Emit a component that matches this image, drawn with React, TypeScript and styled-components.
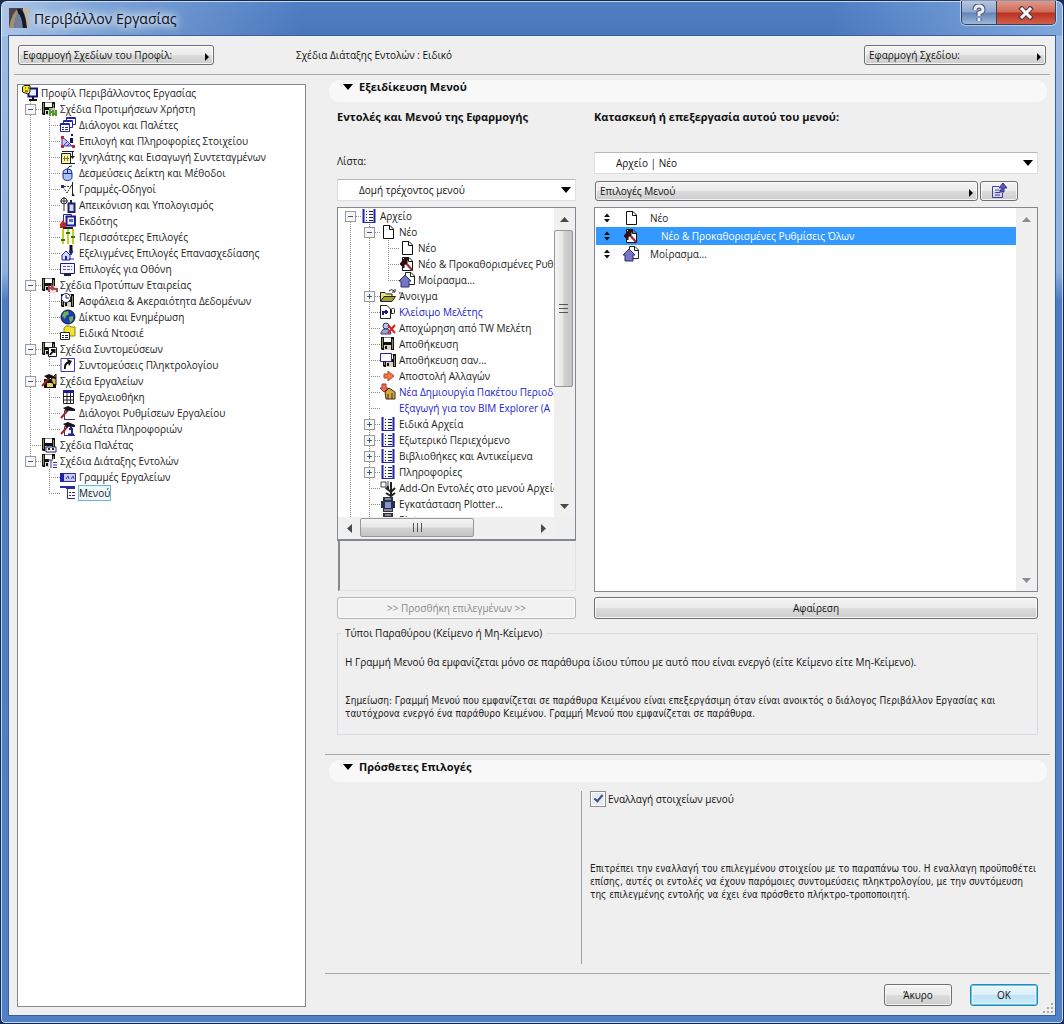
import React from 'react';
import styled, { createGlobalStyle, css } from 'styled-components';

const UI_FONT = '"Open Sans", "Noto Sans", sans-serif';
const NOTE_FONT = '"DejaVu Sans Condensed", "DejaVu Sans", sans-serif';

const Global = createGlobalStyle`
  *, *::before, *::after { box-sizing: border-box; }
  body { margin: 0; background: #1b2c4e; font-family: ${UI_FONT}; font-size: 10px; line-height: 16px; color: #111; }
  button, select, input { font: inherit; color: inherit; }
  p, h1, h2, h3, ul, fieldset { margin: 0; padding: 0; }
`;

/* ---------- window frame ---------- */

const Frame = styled.div`
  display: flex;
  flex-direction: column;
  min-height: 100vh;
  padding: 0 7px 7px;
  border: 1px solid #14284e;
  border-radius: 7px 7px 5px 5px;
  background:
    linear-gradient(90deg, rgba(190, 212, 238, 0.85) 0, rgba(140, 176, 222, 0.8) 90px, rgba(74, 120, 192, 0) 300px, rgba(74, 120, 192, 0) 78%, rgba(140, 180, 228, 0.8) 100%) 0 0 / 100% 35px no-repeat,
    linear-gradient(180deg, #4f7fc4 0, #4a77bc 34px, #9cbbe4 35px, #8fb1e0 270px, #4d7cc4 300px, #4f80c8 100%);
  box-shadow: inset 0 0 0 1px rgba(225, 238, 252, 0.8);
`;

const TitleBar = styled.header`
  display: flex;
  align-items: flex-start;
  height: 34px;
`;

const TitleText = styled.h1`
  flex: 1;
  padding: 7px 0 0 5px;
  font-size: 14px;
  font-weight: 400;
  line-height: 22px;
  color: #0a0f18;
  text-shadow: 0 0 8px #fff, 0 0 8px #fff, 0 0 12px rgba(255, 255, 255, 0.8);
`;

const LogoBox = styled.div`
  display: flex;
  padding: 7px 0 0 1px;
`;

const Caption = styled.div`
  display: flex;
  height: 24px;
  border: 1px solid #33415e;
  border-top: 0;
  border-radius: 0 0 5px 5px;
  overflow: hidden;
  box-shadow: 0 0 0 1px rgba(255, 255, 255, 0.5);
`;

const CaptionButton = styled.button<{ $close?: boolean }>`
  display: flex;
  align-items: center;
  justify-content: center;
  width: ${p => (p.$close ? 58 : 35)}px;
  padding: 0;
  border: 0;
  ${p => p.$close
    ? css`background: linear-gradient(180deg, #e0998a 0, #d06a58 48%, #b9301f 52%, #d3604a 100%);`
    : css`background: linear-gradient(180deg, #b4c6e2 0, #8da6cf 48%, #6483b6 52%, #9cb8dd 100%); border-right: 1px solid #33415e;`}
`;

const Dialog = styled.main`
  flex: 1;
  display: flex;
  flex-direction: column;
  border: 1px solid #3c5f97;
  background: #efefef;
  padding: 0 5px;
`;

/* ---------- controls ---------- */

const raised = css`
  border: 1px solid #707070;
  border-radius: 3px;
  background: linear-gradient(180deg, #f4f4f4 0, #ebebeb 48%, #dcdcdc 52%, #cdcdcd 100%);
  box-shadow: inset 0 0 0 1px rgba(255, 255, 255, 0.75);
`;

const MenuButton = styled.button<{ $width?: number }>`
  ${raised}
  display: flex;
  align-items: center;
  justify-content: space-between;
  ${p => (p.$width ? `width: ${p.$width}px;` : 'flex: 1;')}
  height: 20px;
  padding: 0 3px 0 4px;
  text-align: left;
  svg { align-self: flex-end; margin-bottom: 3px; }
`;

const IconButton = styled.button`
  ${raised}
  display: flex;
  align-items: center;
  justify-content: center;
  width: 38px;
  height: 20px;
  padding: 0;
`;

const PushButton = styled.button<{ $kind?: 'default' | 'wide' }>`
  ${raised}
  width: ${p => (p.$kind === 'wide' ? '100%' : '68px')};
  height: 22px;
  padding: 0;
  color: #111;
  &:disabled { color: #8b8b8b; border-color: #b4b4b4; background: #f2f2f2; }
  ${p => p.$kind === 'default' && css`
    border-color: #3c7fb1;
    background: linear-gradient(180deg, #eef8fd 0, #dceff9 48%, #bfe3f5 52%, #c9eaf8 100%);
    box-shadow: inset 0 0 0 1px #48d0f4, inset 0 0 0 2px rgba(255, 255, 255, 0.5);
  `}
`;

const SelectWrap = styled.div`
  position: relative;
  display: flex;
  background: #fff;
  border: 1px solid #dfdfdf;
  border-top-color: #b9b9b9;
  svg { position: absolute; right: 4px; top: 7px; pointer-events: none; }
`;

const Select = styled.select`
  appearance: none;
  flex: 1;
  height: 20px;
  padding: 0 24px 0 21px;
  border: 0;
  background: transparent;
`;

/* ---------- header ---------- */

const TopBar = styled.div`
  display: flex;
  align-items: center;
  gap: 82px;
  height: 39px;
  padding: 0 4px;
  border-bottom: 1px solid #a9a9a9;
`;

const TopText = styled.p`
  flex: 1;
`;

const Columns = styled.div`
  flex: 1;
  display: flex;
`;

/* ---------- tree ---------- */

const NavPanel = styled.nav`
  flex: 0 0 289px;
  margin: 9px 19px 8px 3px;
  padding: 0 4px;
  border: 1px solid #828790;
  background: #fff;
`;

const TreeList = styled.ul`
  list-style: none;
`;

const TreeItem = styled.li`
  display: flex;
  height: 16px;
  white-space: nowrap;
  color: #222;
`;

const Cell = styled.span`
  flex: 0 0 19px;
  height: 16px;
  svg { display: block; overflow: visible; }
`;

const ItemText = styled.span<{ $blue?: boolean; $focus?: boolean }>`
  color: ${p => (p.$blue ? '#2222cc' : 'inherit')};
  ${p => p.$focus && css`height: 14px; line-height: 14px; margin-top: 1px; outline: 1px solid #6fb4d8; background: #eff8fd;`}
`;

type Guide = 'v' | 't' | 'l' | '-' | 'e' | 'f' | '+' | ' ';
type Row = { g: string; icon: string; text: string; blue?: boolean; focus?: boolean };

function GuideCell({ kind }: { kind: Guide }) {
  const up = 'vtl-e+'.includes(kind);
  const down = 'vt-f+'.includes(kind);
  const box = '-ef+'.includes(kind);
  const side = kind !== 'v' && kind !== ' ';
  return (
    <Cell>
      <svg width="19" height="16" shapeRendering="crispEdges" stroke="#8c8c8c" strokeDasharray="1 1">
        {up && <path d="M8.500 0V8" />}
        {down && <path d="M8.500 8V16" />}
        {side && <path d="M8 8.500H19" />}
        {box && <rect x="3.500" y="3.500" width="10" height="10" rx="1" fill="#f6f6f6" stroke="#9a9a9a" strokeDasharray="none" />}
        {box && <path d={kind === '+' ? 'M6 8.500H11M8.500 6V11' : 'M6 8.500H11'} stroke="#3b5a94" strokeDasharray="none" />}
      </svg>
    </Cell>
  );
}

/* ---------- icons ---------- */

const floppy = (
  <>
    <path d="M1 1H14V14H2L1 13Z" fill="#111" />
    <path d="M4 1.500H11V6H4Z" fill="#fff" />
    <path d="M2 2H3V12H2ZM12 3H13V13H12Z" fill="#8f9048" />
    <path d="M4 9H11V14H4Z" fill="#d8d8c8" />
    <path d="M5 10H7V13H5Z" fill="#111" />
  </>
);
const page = <path d="M3.500 1.500H10L13.500 5V14.500H3.500ZM9.500 1.500V5.500H13.500" fill="#fff" stroke="#111" />;
const hammer = (
  <>
    <path d="M6 6L13 14" stroke="#a3252b" strokeWidth="2" />
    <path d="M1 8L6 2L9 2L8 5L8 7L5 9L5 12Z" fill="#2c0f12" stroke="#2c0f12" />
  </>
);
const pick = (
  <>
    <path d="M1 13L9 4" stroke="#a3252b" strokeWidth="2" />
    <path d="M3 3L8 1L15 4V6L9 5L7 6Z" fill="#141414" />
  </>
);
const listPage = (
  <>
    <path d="M2 1.500H14V14.500H2Z" fill="#f6f8ff" />
    <path d="M2.500 1V15M13.500 1V15" stroke="#2024b0" strokeWidth="2" />
    <path d="M2 14.500H14" stroke="#2024b0" />
    <path d="M5 3.500H6M8 3.500H12M5 6.500H6M8 6.500H12M5 9.500H6M8 9.500H12M5 12.500H6M8 12.500H12" stroke="#222" />
  </>
);
const house = <path d="M0 9L6 3L12 9H10V15H2V9Z" fill="#7676c4" stroke="#2b2b78" />;

const ICONS: Record<string, React.ReactNode> = {
  profile: (
    <>
      <path d="M6.500 3.500H15V11.500H6.500Z" fill="#e8ecff" stroke="#15157c" strokeWidth="2" />
      <path d="M11 12V15M7 15H15" stroke="#111" strokeWidth="2" />
      <path d="M.5 2L2 .5H8V7L6 9L.5 7Z" fill="#f1e62c" stroke="#222" />
      <path d="M3 3H4M6 3H7M3 6H6" stroke="#222" />
    </>
  ),
  saveUser: (<>{floppy}<path d="M8 7H16V16H8Z" fill="#fff" opacity=".7" /><path d="M9 8V15M9 11H12M12 9V15M15 9V15M12 13H16" stroke="#4c9b2c" strokeWidth="2" /></>),
  dialogs: (
    <g fill="#fff" stroke="#2525a8">
      <path d="M6.500 .5H15.500V7.500H6.500Z" /><path d="M6 1.500H16" />
      <path d="M3.500 3.500H12.500V10.500H3.500Z" /><path d="M3 4.500H13" />
      <path d="M.5 6.500H9.500V14.500H.5ZM0 7.500H10M2 10.500H4M5 10.500H8M2 12.500H4M5 12.500H8" />
    </g>
  ),
  selection: (
    <>
      <path d="M2 4L7 8L12 13H2Z" fill="#c9c9f0" stroke="#3535a8" />
      <path d="M4 12L8 8M7 13L10 10" stroke="#3535a8" />
      <path d="M1 3H4V6H1ZM1 12H4V15H1ZM12 12H15V15H12Z" fill="#c51f42" />
      <path d="M11 1H13V3H11ZM10 5H13V10H10" fill="#151568" />
    </>
  ),
  tracker: (
    <>
      <path d="M1.500 4.500H10.500V14.500H1.500Z" fill="#f7f3ae" stroke="#222" />
      <path d="M4.500 7V12M7.500 7V12M3 9.500H9" stroke="#7a7a20" />
      <path d="M2 2.500H14M12.500 3V8M9 14.500H15" stroke="#222" />
      <path d="M10 7H15L12.500 10Z" fill="#222" />
    </>
  ),
  mouse: (<><path d="M3 8Q3 4 8 4Q12 4 12 8V12Q12 15.500 7.500 15.500Q3 15.500 3 12Z" fill="#a7c4f2" stroke="#1b2c86" /><path d="M7.500 8V4Q8 1 12 1M3 8.500H12" stroke="#1b2c86" fill="none" /></>),
  guides: (<><path d="M1 5.500H11M3 6L7 12L13 2" stroke="#333" fill="none" strokeDasharray="2 1" /><path d="M12.500 1V15" stroke="#222" /><path d="M13 12L15 15H13ZM1 4H4V7H1Z" fill="#2e2e6e" /></>),
  calc: (<><circle cx="4" cy="4" r="3" fill="#fff" stroke="#333" /><path d="M4 0V8M0 4H8" stroke="#333" /><path d="M11 3V6" stroke="#222" strokeWidth="2" /><path d="M8.500 6.500H14.500V15H8.500Z" fill="#d6d8f6" stroke="#1e1e74" strokeWidth="2" /><path d="M4 8V14" stroke="#333" /></>),
  publisher: (<><path d="M3.500 1.500H11.500V10.500H3.500Z" fill="#fff" stroke="#2525a8" /><path d="M6.500 3.500H15V12.500H6.500Z" fill="#e6ebff" stroke="#1e1e88" strokeWidth="2" /><path d="M9 6H13V9H9Z" fill="#5c6ec4" /><path d="M0 11L3 7L6 11V15H0Z" fill="#c02a2a" /><path d="M3 15H13" stroke="#222" strokeWidth="2" /></>),
  sliders: (<><path d="M3 0V15M8 0V15M13 0V15" stroke="#c9cf16" strokeWidth="2" /><path d="M1 11H5M6 4H10M11 8H15" stroke="#1e7a2a" strokeWidth="2" /></>),
  redraw: (<><path d="M2 10L6 6L10 10V15H2Z" fill="#d5d8fb" stroke="#2525a8" /><path d="M5 11H7V15H5Z" fill="#2525a8" /><path d="M11 0V6" stroke="#111" strokeWidth="3" /><path d="M9 6H13L11 10ZM9 14H14" fill="#222" stroke="#2525a8" /></>),
  screen: (<><path d="M.5 2.500H14.500V12.500H.5Z" fill="#f2f4ff" stroke="#1e1e74" /><path d="M3 5.500H12M3 8.500H12" stroke="#5555aa" strokeDasharray="3 1" /><path d="M4 14H11" stroke="#222" strokeWidth="2" /></>),
  saveCompany: (<>{floppy}<path d="M8 9H16V16H8Z" fill="#f4dede" /><path d="M8 15V10L11 12V9L13 12H16V15" fill="none" stroke="#a04a56" strokeWidth="2" /></>),
  security: (<>{floppy}<circle cx="6" cy="5" r="4.500" fill="#fff" stroke="#1a237a" /><path d="M6 2V5H9" stroke="#222" fill="none" /></>),
  globe: (<><circle cx="8" cy="8" r="7" fill="#1d3cab" stroke="#111b4c" /><path d="M4 3L8 2L9 5L6 7L5 10L2 7ZM9 8L13 7L13 11L10 14Z" fill="#6fae5a" /></>),
  folderList: (<><path d="M4 3L6 1H10L11 2H15V11H4Z" fill="#f2e32e" stroke="#8b8420" /><path d="M.5 7.500H9.500V14.500H.5Z" fill="#fff" stroke="#222" /><path d="M2 10.500H4M5 10.500H8M2 12.500H4M5 12.500H8" stroke="#222" /></>),
  saveShort: (<>{floppy}<path d="M7.500 6.500H15.500V15.500H7.500Z" fill="#fff" stroke="#222" /><path d="M9 14L13 9M10 9H13.500V12" stroke="#111" strokeWidth="2" fill="none" /></>),
  shortcut: (<><path d="M1 1.500H14.500V14.500H1Z" fill="#fff" stroke="#3a3ab8" /><path d="M5 12Q4 7 9 5" stroke="#111" strokeWidth="2" fill="none" /><path d="M7 2L12 4L9 9Z" fill="#111" /></>),
  saveTools: (<><path d="M3 6H15V15H3Z" fill="#111" /><path d="M6 10H12V14H6Z" fill="#e8d27a" /><path d="M10 6L15 1V12L12 11Z" fill="#d9b74a" stroke="#111" />{pick}</>),
  toolbox: (<><path d="M3 1H14V4H3Z" fill="#1d1d88" /><path d="M3.500 4V14.500H13.500V4M3 7.500H14M3 11H14M7 4V15M10.500 4V15" stroke="#222" fill="none" /></>),
  toolDialogs: (<><path d="M4.500 15V5.500H15M5 14.500H15" stroke="#3b3b70" fill="none" />{pick}</>),
  infoPal: (<><path d="M4.500 15V5.500H15M5 14.500H15" stroke="#3b3b70" fill="none" />{pick}<path d="M9 8H12V13M8 13.500H14M10 6H12" stroke="#2323a0" strokeWidth="2" fill="none" /></>),
  savePalette: (<>{floppy}<path d="M5 10H15V15H5Z" fill="#fff" stroke="#1e1e74" /><path d="M7 12H9M11 12H13" stroke="#222" strokeWidth="2" /></>),
  saveCommands: (<>{floppy}<path d="M8 6H16V16H8Z" fill="#fff" /><path d="M7 7H12M10 7V15M12 9.500H16M12 12H16M12 14.500H16" stroke="#3030a0" /></>),
  toolbars: (<><path d="M.5 4.500H15.500V12.500H.5Z" fill="#c8cbf2" stroke="#2c2ca8" /><path d="M0 4H4V13H0Z" fill="#2222a4" /><path d="M6 10L8 7L9 10M11 10L13 7L14 10" stroke="#4444aa" fill="none" /></>),
  menu: (<><path d="M0 1H15V4H6V3H0Z" fill="#2a2aa4" /><path d="M7.500 4V13.500H15" stroke="#2a2aa4" fill="none" /><path d="M9 7.500H11M12 7.500H15M9 10.500H11M12 10.500H15" stroke="#2a2aa4" /></>),
  list: listPage,
  page,
  pageHammer: (<>{page}{hammer}</>),
  pageHouse: (<><path d="M6.500 .5H12L15.500 4V12.500H6.500ZM11.500 .5V4.500H15.500" fill="#fff" stroke="#222" />{house}</>),
  open: (<><path d="M.5 13V4.500H5L6.500 6H12V8" fill="#e9e48c" stroke="#222" /><path d="M.5 13.500L4 8.500H15.500L12 13.500Z" fill="#a5a22e" stroke="#222" /><path d="M9 3Q12 0 14 3M15 1V4H12" stroke="#222" fill="none" /></>),
  close: (<><path d="M.5 1.500H7L10.500 5V14.500H.5Z" fill="#fff" stroke="#222" /><path d="M3 11V8H8M6 6V10M12 6V10" stroke="#1c1c88" fill="none" strokeWidth="2" /><rect x="11.500" y="4.500" width="3" height="5" rx="1" fill="#fff" stroke="#222" /></>),
  leave: (<><circle cx="6" cy="6" r="3" fill="#bfc3e8" stroke="#333a70" /><path d="M1 14Q1 9 6 9Q10 9 11 14Z" fill="#9ca3d8" stroke="#333a70" /><path d="M8 5L15 13M15 5L8 13" stroke="#d42222" strokeWidth="2" /></>),
  save: floppy,
  saveAs: (<><g transform="translate(2 1)">{floppy}</g><path d="M.5 1.500H11.500V9.500H.5Z" fill="#fff" stroke="#2323a4" strokeWidth="1" /></>),
  send: <path d="M4 6H8V3L14 8L8 13V10H4Z" fill="#ee7a4c" stroke="#b84a24" />,
  package: (<><path d="M2 0H6V4H8L4 8L0 4H2Z" fill="#ee6a50" stroke="#a53a2a" /><path d="M5 8L9 4L15 8V15H6Z" fill="#d8a848" stroke="#3a2a10" /><path d="M8 10V15M12 9V15" stroke="#3a2a10" /></>),
  none: null,
  addon: (<><path d="M1 2H6V7H1ZM8 1V8M5 8H9" stroke="#444" fill="none" /><path d="M11 2V16M6 8L11 12L15 8M8 6V9M6 13L11 16L15 13" stroke="#222" strokeWidth="2" fill="none" /></>),
  plotter: (<><path d="M3 1H13V5H15V12H13V16H3V12H1V5H3Z" fill="#2c3144" /><path d="M5 6H11V12H5Z" fill="#8b92d8" /><path d="M5 3H11M4 14H12" stroke="#dddddd" /></>),
};

function Icon({ name }: { name: string }) {
  return <Cell><svg width="16" height="16" viewBox="0 0 16 16" fill="none" aria-hidden="true">{ICONS[name]}</svg></Cell>;
}

const ArrowRight = () => <svg width="5" height="8" viewBox="0 0 5 8"><path d="M0 0L4 4L0 8Z" fill="#000" /></svg>;
const ArrowDown = () => <svg width="10" height="6" viewBox="0 0 10 6"><path d="M0 0H10L5 6Z" fill="#000" /></svg>;

function Tree({ rows, label }: { rows: Row[]; label: string }) {
  return (
    <TreeList aria-label={label}>
      {rows.map((r, i) => (
        <TreeItem key={i}>
          {r.g.split('').map((k, j) => <GuideCell key={j} kind={k as Guide} />)}
          <Icon name={r.icon} />
          <ItemText $blue={r.blue} $focus={r.focus}>{r.text}</ItemText>
        </TreeItem>
      ))}
    </TreeList>
  );
}

const NAV: Row[] = [
  { g: '', icon: 'profile', text: 'Προφίλ Περιβάλλοντος Εργασίας' },
  { g: '-', icon: 'saveUser', text: 'Σχέδια Προτιμήσεων Χρήστη' },
  { g: 'vt', icon: 'dialogs', text: 'Διάλογοι και Παλέτες' },
  { g: 'vt', icon: 'selection', text: 'Επιλογή και Πληροφορίες Στοιχείου' },
  { g: 'vt', icon: 'tracker', text: 'Ιχνηλάτης και Εισαγωγή Συντεταγμένων' },
  { g: 'vt', icon: 'mouse', text: 'Δεσμεύσεις Δείκτη και Μέθοδοι' },
  { g: 'vt', icon: 'guides', text: 'Γραμμές-Οδηγοί' },
  { g: 'vt', icon: 'calc', text: 'Απεικόνιση και Υπολογισμός' },
  { g: 'vt', icon: 'publisher', text: 'Εκδότης' },
  { g: 'vt', icon: 'sliders', text: 'Περισσότερες Επιλογές' },
  { g: 'vt', icon: 'redraw', text: 'Εξελιγμένες Επιλογές Επανασχεδίασης' },
  { g: 'vl', icon: 'screen', text: 'Επιλογές για Οθόνη' },
  { g: '-', icon: 'saveCompany', text: 'Σχέδια Προτύπων Εταιρείας' },
  { g: 'vt', icon: 'security', text: 'Ασφάλεια & Ακεραιότητα Δεδομένων' },
  { g: 'vt', icon: 'globe', text: 'Δίκτυο και Ενημέρωση' },
  { g: 'vl', icon: 'folderList', text: 'Ειδικά Ντοσιέ' },
  { g: '-', icon: 'saveShort', text: 'Σχέδια Συντομεύσεων' },
  { g: 'vl', icon: 'shortcut', text: 'Συντομεύσεις Πληκτρολογίου' },
  { g: '-', icon: 'saveTools', text: 'Σχέδια Εργαλείων' },
  { g: 'vt', icon: 'toolbox', text: 'Εργαλειοθήκη' },
  { g: 'vt', icon: 'toolDialogs', text: 'Διάλογοι Ρυθμίσεων Εργαλείου' },
  { g: 'vl', icon: 'infoPal', text: 'Παλέτα Πληροφοριών' },
  { g: 't', icon: 'savePalette', text: 'Σχέδια Παλέτας' },
  { g: 'e', icon: 'saveCommands', text: 'Σχέδια Διάταξης Εντολών' },
  { g: ' t', icon: 'toolbars', text: 'Γραμμές Εργαλείων' },
  { g: ' l', icon: 'menu', text: 'Μενού', focus: true },
];

const COMMANDS: Row[] = [
  { g: 'f', icon: 'list', text: 'Αρχείο' },
  { g: 'v-', icon: 'page', text: 'Νέο' },
  { g: 'vvt', icon: 'page', text: 'Νέο' },
  { g: 'vvt', icon: 'pageHammer', text: 'Νέο & Προκαθορισμένες Ρυθμίσεις Όλων' },
  { g: 'vvl', icon: 'pageHouse', text: 'Μοίρασμα...' },
  { g: 'v+', icon: 'open', text: 'Άνοιγμα' },
  { g: 'vt', icon: 'close', text: 'Κλείσιμο Μελέτης', blue: true },
  { g: 'vt', icon: 'leave', text: 'Αποχώρηση από TW Μελέτη' },
  { g: 'vt', icon: 'save', text: 'Αποθήκευση' },
  { g: 'vt', icon: 'saveAs', text: 'Αποθήκευση σαν...' },
  { g: 'vt', icon: 'send', text: 'Αποστολή Αλλαγών' },
  { g: 'vt', icon: 'package', text: 'Νέα Δημιουργία Πακέτου Περιοδείας', blue: true },
  { g: 'vt', icon: 'none', text: 'Εξαγωγή για τον BIM Explorer (A', blue: true },
  { g: 'v+', icon: 'list', text: 'Ειδικά Αρχεία' },
  { g: 'v+', icon: 'list', text: 'Εξωτερικό Περιεχόμενο' },
  { g: 'v+', icon: 'list', text: 'Βιβλιοθήκες και Αντικείμενα' },
  { g: 'v+', icon: 'list', text: 'Πληροφορίες' },
  { g: 'vt', icon: 'addon', text: 'Add-On Εντολές στο μενού Αρχείο' },
  { g: 'vt', icon: 'plotter', text: 'Εγκατάσταση Plotter...' },
  { g: 'vt', icon: 'plotter', text: 'Plot' },
];

/* ---------- right side ---------- */

const Content = styled.section`
  flex: 1;
  min-width: 0;
  display: flex;
  flex-direction: column;
`;

const Pill = styled.h2`
  display: flex;
  align-items: center;
  gap: 6px;
  height: 22px;
  margin: 5px 3px 0 4px;
  padding: 0 14px 8px;
  border-radius: 11px;
  background: #f8f8f8;
  font-size: 11px;
  font-weight: 700;
  color: #111;
`;

const MenuSection = styled.div`
  display: grid;
  grid-template-columns: 239px 1fr;
  column-gap: 18px;
  padding: 7px 12px 0;
`;

const Column = styled.div`
  display: flex;
  flex-direction: column;
`;

const Heading = styled.h3`
  height: 43px;
  font-size: 11px;
  font-weight: 700;
  color: #111;
`;

const FieldLabel = styled.label`
  padding: 1px 0 10px;
`;

const HiddenLabel = styled.label`
  position: absolute;
  width: 1px;
  height: 1px;
  overflow: hidden;
  clip-path: inset(50%);
`;

const TreeBox = styled.div`
  display: grid;
  grid-template-columns: 1fr 21px;
  grid-template-rows: 309px 22px;
  margin-top: 6px;
  border: 1px solid #828790;
  border-bottom-width: 2px;
  background: #efefef;
`;

const TreeView = styled.div`
  overflow: hidden;
  padding-left: 4px;
  background: #fff;
`;

const ScrollTrack = styled.div<{ $horizontal?: boolean }>`
  display: flex;
  flex-direction: ${p => (p.$horizontal ? 'row' : 'column')};
  align-items: stretch;
  background: #f0f0f0;
`;

const ScrollButton = styled.button`
  display: flex;
  align-items: center;
  justify-content: center;
  flex: 0 0 22px;
  padding: 0;
  border: 0;
  background: transparent;
`;

const ScrollThumb = styled.div<{ $horizontal?: boolean }>`
  display: flex;
  align-items: center;
  justify-content: center;
  flex: 0 0 ${p => (p.$horizontal ? 114 : 157)}px;
  margin: ${p => (p.$horizontal ? '1px 0 2px' : '0 2px 0 0')};
  border: 1px solid #979797;
  border-radius: 2px;
  background: linear-gradient(${p => (p.$horizontal ? '180deg' : '90deg')}, #f5f5f5 0, #e6e6e6 48%, #d2d2d2 52%, #c4c4c4 100%);
`;

const Spacer = styled.div`
  flex: 1;
`;

const Preview = styled.div`
  height: 50px;
  margin: 0 0 6px 1px;
  border: 1px solid #e2e2e2;
  border-left: 2px solid #8a8a8a;
  border-top: 0;
`;

const ButtonRow = styled.div`
  display: flex;
  gap: 2px;
  margin: 7px 20px 6px 1px;
`;

const OrderBox = styled.div`
  flex: 1;
  display: grid;
  grid-template-columns: 1fr 21px;
  margin-bottom: 5px;
  border: 1px solid #828790;
  background: #fff;
`;

const OrderList = styled.ul`
  list-style: none;
  padding: 1px 0 0 1px;
`;

const OrderItem = styled.li<{ $selected?: boolean; $indent?: boolean }>`
  display: flex;
  align-items: center;
  height: 18px;
  padding-left: 8px;
  color: ${p => (p.$selected ? '#fff' : '#222')};
  background: ${p => (p.$selected ? '#3399ff' : 'transparent')};
  & > span:last-child { padding-left: ${p => (p.$indent ? 19 : 8)}px; }
`;

const Types = styled.fieldset`
  margin: 6px 12px 19px;
  padding: 13px 7px 14px;
  border: 1px solid #d8dce2;
  legend { padding: 0 4px; margin-left: -4px; height: 16px; }
`;

const Note = styled.p`
  margin-top: 24px;
  font-family: ${NOTE_FONT};
  line-height: 13px;
  color: #222;
`;

const Extra = styled.div`
  display: grid;
  grid-template-columns: 256px 1fr;
  padding: 9px 0 9px;
  flex: 1;
`;

const ExtraBody = styled.div`
  grid-column: 2;
  padding: 0 0 0 8px;
  border-left: 1px solid #a0a0a0;
`;

const CheckLabel = styled.label`
  display: flex;
  align-items: center;
  gap: 2px;
  height: 16px;
`;

const Check = styled.input`
  appearance: none;
  display: block;
  width: 16px;
  height: 16px;
  margin: 0;
  border: 1px solid #8e8f8f;
  background: #e6ebf2;
  box-shadow: inset 0 0 0 1px #fff;
  &:checked::after {
    content: '';
    display: block;
    width: 5px;
    height: 9px;
    margin: 1px 0 0 5px;
    border: solid #3c4f8c;
    border-width: 0 2px 2px 0;
    transform: rotate(40deg);
  }
`;

const ExtraNote = styled(Note)`
  margin-top: 55px;
`;

const Rule = styled.hr`
  width: 100%;
  height: 1px;
  margin: 0;
  border: 0;
  background: #a9a9a9;
`;

const Footer = styled.footer`
  display: flex;
  justify-content: flex-end;
  gap: 18px;
  padding: 10px 0 9px;
`;

const Grip = styled.div`
  align-self: flex-end;
  display: flex;
  margin: 0 -4px -8px -14px;
`;

function ScrollArrow({ dir, dim }: { dir: 'up' | 'down' | 'left' | 'right'; dim?: boolean }) {
  const d = { up: 'M0 7L4.500 2L9 7Z', down: 'M0 2L4.500 7L9 2Z', left: 'M7 0L2 4.500L7 9Z', right: 'M2 0L7 4.500L2 9Z' }[dir];
  return (
    <ScrollButton aria-label={`Κύλιση ${dir}`}>
      <svg width="9" height="9" viewBox="0 0 9 9"><path d={d} fill={dim ? '#8c8c8c' : '#4a4a4a'} /></svg>
    </ScrollButton>
  );
}

const Handle = () => (
  <Cell><svg width="6" height="16" viewBox="0 0 6 16"><path d="M0 7L3 3.500L6 7ZM0 9L3 12.500L6 9Z" fill="#111" /></svg></Cell>
);

export default function App() {
  return (
    <>
      <Global />
      <Frame>
        <TitleBar>
          <LogoBox>
            <svg width="20" height="20" viewBox="0 0 20 20" aria-hidden="true">
              <rect width="20" height="20" fill="#4a4650" />
              <path d="M0 20Q3 4 9 1Q11 2 9 5Q6 9 5 20Z" fill="#a48c76" />
              <path d="M5 20Q6 8 9 5Q13 7 14 20Z" fill="#6f7f9c" />
              <path d="M8 1Q12 0 14 4Q17 10 18 20H14Q13 8 9 5Z" fill="#15182a" />
              <path d="M14 0H20V20H18Q17 8 14 3Z" fill="#c2b5a2" />
            </svg>
          </LogoBox>
          <TitleText>Περιβάλλον Εργασίας</TitleText>
          <Caption>
            <CaptionButton aria-label="Βοήθεια">
              <svg width="14" height="18" viewBox="0 0 14 18" fill="none">
                <path d="M3 6Q3 2 7 2Q11 2 11 6Q11 8 7 9V12M7 14V17" stroke="#4a5468" strokeWidth="5" />
                <path d="M3 6Q3 2 7 2Q11 2 11 6Q11 8 7 9V12M7 14V17" stroke="#e8ecf4" strokeWidth="3" />
              </svg>
            </CaptionButton>
            <CaptionButton $close aria-label="Κλείσιμο">
              <svg width="16" height="14" viewBox="0 0 16 14" fill="none">
                <path d="M2 1L14 13M14 1L2 13" stroke="#5a3a3e" strokeWidth="5" />
                <path d="M3 2L13 12M13 2L3 12" stroke="#fff" strokeWidth="3" />
              </svg>
            </CaptionButton>
          </Caption>
        </TitleBar>

        <Dialog>
          <TopBar>
            <MenuButton $width={196}>Εφαρμογή Σχεδίων του Προφίλ:<ArrowRight /></MenuButton>
            <TopText>Σχέδια Διάταξης Εντολών : Ειδικό</TopText>
            <MenuButton $width={182}>Εφαρμογή Σχεδίου:<ArrowRight /></MenuButton>
          </TopBar>

          <Columns>
            <NavPanel aria-label="Σχέδια"><Tree rows={NAV} label="Σχέδια" /></NavPanel>

            <Content>
              <Pill><ArrowDown />Εξειδίκευση Μενού</Pill>
              <MenuSection>
                <Column>
                  <Heading>Εντολές και Μενού της Εφαρμογής</Heading>
                  <FieldLabel htmlFor="source">Λίστα:</FieldLabel>
                  <SelectWrap>
                    <Select id="source"><option>Δομή τρέχοντος μενού</option></Select>
                    <ArrowDown />
                  </SelectWrap>
                  <TreeBox>
                    <TreeView><Tree rows={COMMANDS} label="Εντολές" /></TreeView>
                    <ScrollTrack>
                      <ScrollArrow dir="up" />
                      <ScrollThumb><svg width="9" height="11" viewBox="0 0 9 11"><path d="M0 1.500H9M0 5.500H9M0 9.500H9" stroke="#555" /></svg></ScrollThumb>
                      <Spacer />
                      <ScrollArrow dir="down" />
                    </ScrollTrack>
                    <ScrollTrack $horizontal>
                      <ScrollArrow dir="left" />
                      <ScrollThumb $horizontal><svg width="11" height="9" viewBox="0 0 11 9"><path d="M1.500 0V9M5.500 0V9M9.500 0V9" stroke="#555" /></svg></ScrollThumb>
                      <Spacer />
                      <ScrollArrow dir="right" />
                    </ScrollTrack>
                  </TreeBox>
                  <Preview />
                  <PushButton $kind="wide" disabled>&gt;&gt; Προσθήκη επιλεγμένων &gt;&gt;</PushButton>
                </Column>

                <Column>
                  <Heading>Κατασκευή ή επεξεργασία αυτού του μενού:</Heading>
                  <SelectWrap>
                    <HiddenLabel htmlFor="target">Μενού</HiddenLabel>
                    <Select id="target"><option>Αρχείο | Νέο</option></Select>
                    <ArrowDown />
                  </SelectWrap>
                  <ButtonRow>
                    <MenuButton>Επιλογές Μενού<ArrowRight /></MenuButton>
                    <IconButton aria-label="Εξαγωγή">
                      <svg width="18" height="16" viewBox="0 0 18 16" fill="none">
                        <path d="M9 3.500H2.500V14.500H12.500V10" stroke="#3d3da6" strokeWidth="1" />
                        <path d="M5 7H9M5 9.500H10M5 12H10" stroke="#3d3da6" />
                        <path d="M13 0L17 5H14V9H10V7H12V5H9Z" fill="#5a5ac0" stroke="#2e2e8c" />
                      </svg>
                    </IconButton>
                  </ButtonRow>
                  <OrderBox>
                    <OrderList>
                      <OrderItem><Handle /><Icon name="page" /><span>Νέο</span></OrderItem>
                      <OrderItem $selected $indent><Handle /><Icon name="pageHammer" /><span>Νέο &amp; Προκαθορισμένες Ρυθμίσεις Όλων</span></OrderItem>
                      <OrderItem><Handle /><Icon name="pageHouse" /><span>Μοίρασμα...</span></OrderItem>
                    </OrderList>
                    <ScrollTrack><ScrollArrow dir="up" dim /><Spacer /><ScrollArrow dir="down" dim /></ScrollTrack>
                  </OrderBox>
                  <PushButton $kind="wide">Αφαίρεση</PushButton>
                </Column>
              </MenuSection>

              <Types>
                <legend>Τύποι Παραθύρου (Κείμενο ή Μη-Κείμενο)</legend>
                <p>Η Γραμμή Μενού θα εμφανίζεται μόνο σε παράθυρα ίδιου τύπου με αυτό που είναι ενεργό (είτε Κείμενο είτε Μη-Κείμενο).</p>
                <Note>
                  Σημείωση: Γραμμή Μενού που εμφανίζεται σε παράθυρα Κειμένου είναι επεξεργάσιμη όταν είναι ανοικτός ο διάλογος Περιβάλλον Εργασίας και<br />
                  ταυτόχρονα ενεργό ένα παράθυρο Κειμένου. Γραμμή Μενού που εμφανίζεται σε παράθυρα.
                </Note>
              </Types>
              <Rule />

              <Pill><ArrowDown />Πρόσθετες Επιλογές</Pill>
              <Extra>
                <ExtraBody>
                  <CheckLabel><Check type="checkbox" defaultChecked />Εναλλαγή στοιχείων μενού</CheckLabel>
                  <ExtraNote>
                    Επιτρέπει την εναλλαγή του επιλεγμένου στοιχείου με το παραπάνω του. Η εναλλαγη προϋποθέτει<br />
                    επίσης, αυτές οι εντολές να έχουν παρόμοιες συντομεύσεις πληκτρολογίου, με την συντόμευση<br />
                    της επιλεγμένης εντολής να έχει ένα πρόσθετο πλήκτρο-τροποποιητή.
                  </ExtraNote>
                </ExtraBody>
              </Extra>
              <Rule />
              <Footer>
                <PushButton>Άκυρο</PushButton>
                <PushButton $kind="default">OK</PushButton>
                <Grip><svg width="12" height="12" viewBox="0 0 12 12"><path d="M9 1H11V3H9ZM5 5H7V7H5ZM9 5H11V7H9ZM1 9H3V11H1ZM5 9H7V11H5ZM9 9H11V11H9Z" fill="#a8a8a8" /></svg></Grip>
              </Footer>
            </Content>
          </Columns>
        </Dialog>
      </Frame>
    </>
  );
}
